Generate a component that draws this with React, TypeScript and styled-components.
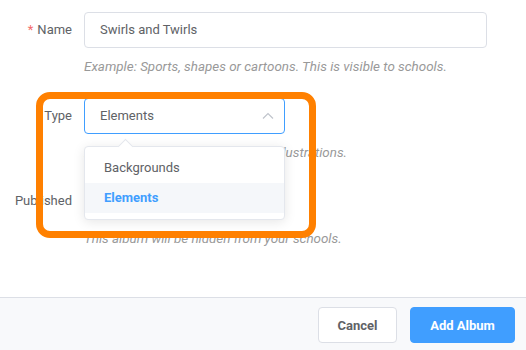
import React from "react";
import styled, { createGlobalStyle } from "styled-components";

const GlobalStyle = createGlobalStyle`
  html, body {
    margin: 0;
    padding: 0;
    background: #fff;
  }
  body {
    font-family: Roboto, "Liberation Sans", sans-serif;
  }
`;

const Dialog = styled.div`
  position: relative;
  width: 526px;
  height: 350px;
  display: flex;
  flex-direction: column;
  background: #fff;
  overflow: hidden;
`;

const Body = styled.div`
  flex: 1;
  padding: 12px 39px 0 0;
`;

const Row = styled.div<{ gap?: number }>`
  display: flex;
  margin-bottom: ${(p) => p.gap ?? 0}px;
`;

const Label = styled.label`
  width: 84px;
  flex-shrink: 0;
  box-sizing: border-box;
  padding-right: 12px;
  text-align: right;
  font-size: 13px;
  line-height: 36px;
  color: #606266;
  white-space: nowrap;
`;

const Star = styled.span`
  color: #f56c6c;
  margin-right: 4px;
`;

const Field = styled.div`
  position: relative;
  flex: 1;
`;

const Input = styled.div<{ focused?: boolean; width?: number }>`
  position: relative;
  box-sizing: border-box;
  width: ${(p) => (p.width ? `${p.width}px` : "100%")};
  height: 36px;
  padding: 0 15px;
  border: 1px solid ${(p) => (p.focused ? "#409eff" : "#dcdfe6")};
  border-radius: 4px;
  font-size: 13px;
  line-height: 34px;
  color: #606266;
`;

const Chevron = styled.svg`
  position: absolute;
  right: 10px;
  top: 12px;
`;

const Control = styled.div`
  height: 36px;
`;

const Help = styled.div<{ top: number }>`
  margin-top: ${(p) => p.top}px;
  font-size: 13.4px;
  line-height: 18px;
  font-style: italic;
  color: #999;
  white-space: nowrap;
`;

const Menu = styled.div`
  position: absolute;
  left: 0;
  top: 48px;
  width: 201px;
  box-sizing: border-box;
  padding: 6px 0;
  background: #fff;
  border: 1px solid #e4e7ed;
  border-radius: 4px;
  box-shadow: 0 2px 12px rgba(0, 0, 0, 0.1);
  z-index: 2;
  &::before {
    content: "";
    position: absolute;
    top: -6px;
    left: 35px;
    width: 10px;
    height: 10px;
    background: #fff;
    border-left: 1px solid #e4e7ed;
    border-top: 1px solid #e4e7ed;
    transform: rotate(45deg);
  }
`;

const Item = styled.div<{ active?: boolean }>`
  position: relative;
  height: 30px;
  padding: 0 19px;
  font-size: 13px;
  line-height: 30px;
  color: ${(p) => (p.active ? "#409eff" : "#606266")};
  font-weight: ${(p) => (p.active ? 700 : 400)};
  background: ${(p) => (p.active ? "#f5f7fa" : "transparent")};
`;

const Highlight = styled.div`
  position: absolute;
  left: 36px;
  top: 92px;
  width: 280px;
  height: 146px;
  box-sizing: border-box;
  border: 7px solid #ff8000;
  border-radius: 14px;
  z-index: 3;
  pointer-events: none;
`;

const Footer = styled.div`
  height: 53px;
  box-sizing: border-box;
  border-top: 1px solid #dcdfe6;
  background: #f8f9fb;
  display: flex;
  justify-content: flex-end;
  align-items: flex-start;
  gap: 13px;
  padding: 9px 11px 0 0;
`;

const Button = styled.button<{ primary?: boolean; width: number }>`
  width: ${(p) => p.width}px;
  height: 36px;
  padding: 0;
  border-radius: 4px;
  border: 1px solid ${(p) => (p.primary ? "#409eff" : "#dcdfe6")};
  background: ${(p) => (p.primary ? "#409eff" : "#fff")};
  color: ${(p) => (p.primary ? "#fff" : "#606266")};
  font-family: Roboto, "Liberation Sans", sans-serif;
  font-size: 13px;
  font-weight: 700;
  cursor: pointer;
`;

export default function App() {
  return (
    <Dialog>
      <GlobalStyle />
      <Body>
        <Row gap={22}>
          <Label>
            <Star>*</Star>Name
          </Label>
          <Field>
            <Input>Swirls and Twirls</Input>
            <Help top={10}>
              Example: Sports, shapes or cartoons. This is visible to schools.
            </Help>
          </Field>
        </Row>
        <Row gap={21}>
          <Label>Type</Label>
          <Field>
            <Input focused width={201}>
              Elements
              <Chevron width="12" height="10" viewBox="0 0 12 10">
                <path d="M1 7.5 L6 2.5 L11 7.5" fill="none" stroke="#c0c4cc" strokeWidth="1.2" />
              </Chevron>
            </Input>
            <Help top={10}>Backgrounds are larger, full-page illustrations.</Help>
            <Menu>
              <Item>Backgrounds</Item>
              <Item active>Elements</Item>
            </Menu>
          </Field>
        </Row>
        <Row>
          <Label>Published</Label>
          <Field>
            <Control />
            <Help top={11}>This album will be hidden from your schools.</Help>
          </Field>
        </Row>
      </Body>
      <Footer>
        <Button width={79}>Cancel</Button>
        <Button primary width={105}>
          Add Album
        </Button>
      </Footer>
      <Highlight />
    </Dialog>
  );
}
